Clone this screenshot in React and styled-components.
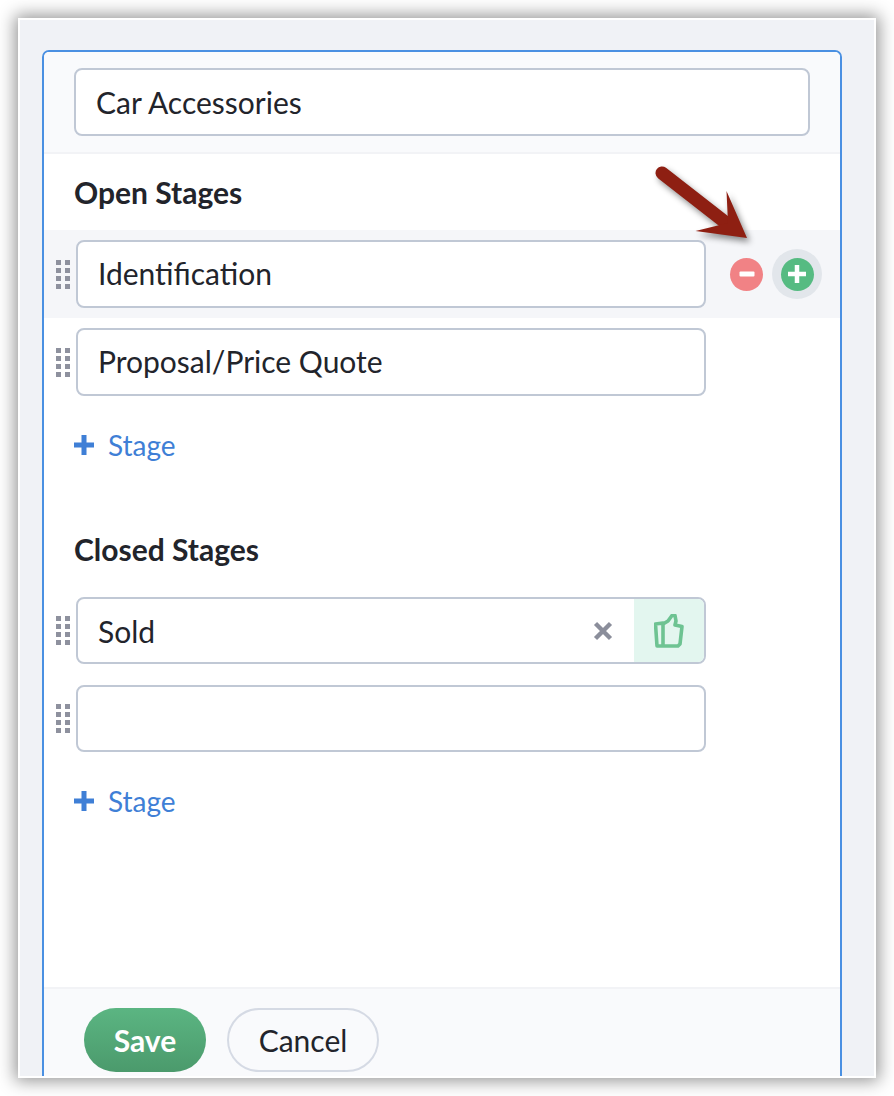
import React from "react";
import styled, { createGlobalStyle } from "styled-components";

const GlobalStyle = createGlobalStyle`
  html, body {
    margin: 0;
    padding: 0;
    background: #fff;
    font-family: Lato, "Open Sans", sans-serif;
    color: #22242b;
    font-feature-settings: "liga", "dlig";
  }
`;

const Page = styled.div`
  width: 894px;
  height: 1096px;
  padding: 18px;
  box-sizing: border-box;
  overflow: hidden;
  position: relative;
`;

const Frame = styled.div`
  width: 858px;
  height: 1060px;
  box-sizing: border-box;
  border: 2px solid #fff;
  padding: 30px 32px 0 22px;
  background: #f0f2f6;
  box-shadow: 0 0 16px 3px rgba(0, 0, 0, 0.42);
  overflow: hidden;
`;

const Panel = styled.div`
  width: 800px;
  height: 1028px;
  box-sizing: border-box;
  border: 2px solid #4a90e2;
  border-bottom: none;
  border-radius: 7px 7px 0 0;
  background: #fff;
  display: flex;
  flex-direction: column;
`;

const Header = styled.div`
  height: 102px;
  box-sizing: border-box;
  padding: 16px 30px 0;
  background: #f9fafc;
  border-bottom: 2px solid #f2f3f6;
  border-radius: 5px 5px 0 0;
`;

const Field = styled.div`
  height: ${(p) => (p.$tall ? 68 : 67)}px;
  width: ${(p) => (p.$wide ? "736px" : "630px")};
  box-sizing: border-box;
  border: 2px solid #c0c8d5;
  border-radius: 8px;
  background: #fff;
  display: flex;
  align-items: center;
  padding-left: 20px;
  padding-bottom: ${(p) => (p.$lift ? 3 : 0)}px;
  font-size: 30px;
  overflow: hidden;
`;

const Body = styled.div`
  flex: 1;
`;

const Title = styled.h2`
  margin: 0;
  padding-left: 30px;
  font-size: 30px;
  font-weight: 700;
  line-height: 36px;
  color: #22242b;
`;

const OpenTitle = styled(Title)`
  padding-top: 20px;
  padding-bottom: 20px;
`;

const ClosedTitle = styled(Title)`
  padding-top: 68px;
  padding-bottom: 30px;
`;

const Row = styled.div`
  height: ${(p) => p.$height}px;
  display: flex;
  align-items: center;
  background: ${(p) => (p.$active ? "#f5f6f9" : "transparent")};
`;

const Handle = styled.div`
  width: 15px;
  margin-left: 12px;
  margin-right: 5px;
  display: grid;
  grid-template-columns: 5px 5px;
  column-gap: 4px;
  row-gap: 3px;

  span {
    height: 5px;
    background: #8e919e;
  }
`;

const Actions = styled.div`
  display: flex;
  align-items: center;
  margin-left: 24px;
`;

const RoundBtn = styled.div`
  width: 33px;
  height: 33px;
  border-radius: 50%;
  background: ${(p) => p.$color};
  display: flex;
  align-items: center;
  justify-content: center;
`;

const Halo = styled.div`
  width: 50px;
  height: 50px;
  margin-left: 9px;
  border-radius: 50%;
  background: #e2e6eb;
  display: flex;
  align-items: center;
  justify-content: center;
`;

const AddStage = styled.div`
  display: flex;
  align-items: center;
  gap: 14px;
  margin-left: 30px;
  height: 36px;
  color: #3f7fd6;
  font-size: 28px;
`;

const OpenAdd = styled(AddStage)`
  margin-top: 21px;
`;

const ClosedAdd = styled(AddStage)`
  margin-top: 10px;
`;

const FieldText = styled.span`
  flex: 1;
`;

const Clear = styled.div`
  width: 62px;
  display: flex;
  justify-content: center;
`;

const WonTag = styled.div`
  width: 70px;
  height: 100%;
  background: #e3f6ef;
  display: flex;
  align-items: center;
  justify-content: center;
`;

const Footer = styled.div`
  height: 91px;
  box-sizing: border-box;
  background: #f9fafc;
  border-top: 2px solid #f2f3f6;
  padding: 19px 0 0 40px;
  display: flex;
  align-items: flex-start;
  gap: 21px;
`;

const Save = styled.button`
  width: 122px;
  height: 64px;
  border: none;
  border-radius: 32px;
  background: linear-gradient(#5bb582, #4b9a6c);
  color: #fff;
  font-family: inherit;
  font-size: 30px;
  font-weight: 700;
`;

const Cancel = styled.button`
  width: 152px;
  height: 64px;
  box-sizing: border-box;
  border: 2px solid #d5dae4;
  border-radius: 32px;
  background: #f9fafc;
  color: #22242b;
  font-family: inherit;
  font-size: 30px;
`;

const ArrowMark = styled.svg`
  position: absolute;
  left: 640px;
  top: 150px;
  filter: drop-shadow(3px 4px 3px rgba(0, 0, 0, 0.45));
`;

const Grip = () => (
  <Handle>
    {Array.from({ length: 8 }).map((_, i) => (
      <span key={i} />
    ))}
  </Handle>
);

const Minus = () => (
  <svg width="16" height="6" viewBox="0 0 16 6">
    <rect width="15" height="5" x="0.5" y="0.5" rx="1" fill="#fff" />
  </svg>
);

const Plus = ({ size = 20, color = "#fff", thick = 5 }) => (
  <svg width={size} height={size} viewBox={`0 0 ${size} ${size}`}>
    <rect x={(size - thick) / 2} width={thick} height={size} fill={color} />
    <rect y={(size - thick) / 2} width={size} height={thick} fill={color} />
  </svg>
);

const Cross = () => (
  <svg width="20" height="20" viewBox="0 0 20 20">
    <path d="M2.5 2.5L17.5 17.5M17.5 2.5L2.5 17.5" stroke="#8b8e9b" strokeWidth="4.4" />
  </svg>
);

const ThumbUp = () => (
  <svg width="30" height="34" viewBox="0 0 30 34" fill="none">
    <path
      d="M1.5 10L9 9V32H3ZM9 10L14 7L18 1.5H21L22 7L21 11L28 12.5L26 30L24 32H9"
      stroke="#6ec392"
      strokeWidth="3.6"
      strokeLinejoin="round"
      strokeLinecap="round"
    />
  </svg>
);

const Arrow = () => (
  <ArrowMark width="120" height="100" viewBox="0 0 120 100">
    <path
      d="M22 23L90 76"
      stroke="#8e1f12"
      strokeWidth="13"
      strokeLinecap="round"
      fill="none"
    />
    <path d="M86.5 41L107 88L55.5 81L88 73Z" fill="#8e1f12" />
  </ArrowMark>
);

const App = () => {
  return (
    <Page>
      <GlobalStyle />
      <Frame>
        <Panel>
          <Header>
            <Field $wide $tall>Car Accessories</Field>
          </Header>
          <Body>
            <OpenTitle>Open Stages</OpenTitle>
            <Row $active $height={88}>
              <Grip />
              <Field $tall $lift>Identification</Field>
              <Actions>
                <RoundBtn $color="#f18285">
                  <Minus />
                </RoundBtn>
                <Halo>
                  <RoundBtn $color="#56bb82">
                    <Plus size={18} thick={4.5} />
                  </RoundBtn>
                </Halo>
              </Actions>
            </Row>
            <Row $height={88}>
              <Grip />
              <Field $tall $lift>Proposal/Price Quote</Field>
            </Row>
            <OpenAdd>
              <Plus color="#3f7fd6" />
              Stage
            </OpenAdd>
            <ClosedTitle>Closed Stages</ClosedTitle>
            <Row $height={67}>
              <Grip />
              <Field>
                <FieldText>Sold</FieldText>
                <Clear>
                  <Cross />
                </Clear>
                <WonTag>
                  <ThumbUp />
                </WonTag>
              </Field>
            </Row>
            <Row $height={109}>
              <Grip />
              <Field />
            </Row>
            <ClosedAdd>
              <Plus color="#3f7fd6" />
              Stage
            </ClosedAdd>
          </Body>
          <Footer>
            <Save>Save</Save>
            <Cancel>Cancel</Cancel>
          </Footer>
        </Panel>
      </Frame>
      <Arrow />
    </Page>
  );
};

export default App;
